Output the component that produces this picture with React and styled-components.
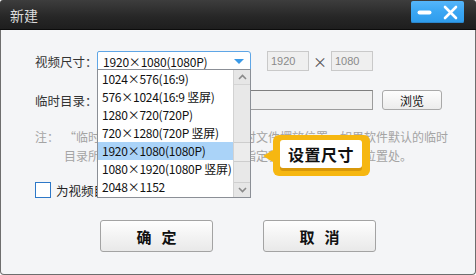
import React from 'react';
import styled, { createGlobalStyle } from 'styled-components';

const GlobalStyle = createGlobalStyle`
  html, body {
    margin: 0;
    padding: 0;
    background: #ffffff;
  }
  body {
    font-family: "Noto Sans CJK SC", "Liberation Sans", sans-serif;
  }
`;

const sizes = [
  '1024×576(16:9)',
  '576×1024(16:9 竖屏)',
  '1280×720(720P)',
  '720×1280(720P 竖屏)',
  '1920×1080(1080P)',
  '1080×1920(1080P 竖屏)',
  '2048×1152',
];

const noteLines = [
  '“临时目录”是视频处理过程中临时文件摆放位置，如果软件默认的临时',
  '目录所在磁盘剩余空间不足，可以指定新的临时目录存放位置处。',
];

const App = () => {
  const selected = '1920×1080(1080P)';

  return (
    <>
      <GlobalStyle />
      <Window>
        <TitleBar>
          <Title>新建</Title>
          <WinButtons>
            <WinButton aria-label="最小化">
              <svg width="15" height="5" viewBox="0 0 15 5">
                <rect x="0.5" y="0.5" width="14" height="4" rx="2" fill="#fff" />
              </svg>
            </WinButton>
            <WinButton aria-label="关闭">
              <svg width="15" height="15" viewBox="0 0 15 15">
                <path d="M2 2 L13 13 M13 2 L2 13" stroke="#fff" strokeWidth="2.6" strokeLinecap="round" />
              </svg>
            </WinButton>
          </WinButtons>
        </TitleBar>

        <Body>
          <Row>
            <Label>视频尺寸：</Label>
            <SelectWrap>
              <Select>
                <span>{selected}</span>
                <Caret />
              </Select>
              <DropList>
                <Options>
                  {sizes.map((s) => (
                    <Option key={s} active={s === selected}>{s}</Option>
                  ))}
                </Options>
                <ScrollBar>
                  <ScrollBtn>
                    <svg width="9" height="6" viewBox="0 0 9 6">
                      <path d="M1 5 L4.5 1.5 L8 5" stroke="#8a8a8a" strokeWidth="1.6" fill="none" />
                    </svg>
                  </ScrollBtn>
                  <Track>
                    <Thumb />
                  </Track>
                  <ScrollBtn>
                    <svg width="9" height="6" viewBox="0 0 9 6">
                      <path d="M1 1 L4.5 4.5 L8 1" stroke="#8a8a8a" strokeWidth="1.6" fill="none" />
                    </svg>
                  </ScrollBtn>
                </ScrollBar>
              </DropList>
            </SelectWrap>
            <DimInput first>1920</DimInput>
            <Times>×</Times>
            <DimInput>1080</DimInput>
          </Row>

          <Row gap={19}>
            <Label>临时目录：</Label>
            <PathInput />
            <SmallButton>浏览</SmallButton>
          </Row>

          <Note>
            <NoteLabel>注：</NoteLabel>
            <NoteText>
              {noteLines.map((line) => (
                <NoteLine key={line}>{line}</NoteLine>
              ))}
            </NoteText>
          </Note>

          <CheckRow>
            <CheckBox />
            <CheckText>为视频目录下创建临时文件夹</CheckText>
          </CheckRow>

          <Actions>
            <BigButton>确定</BigButton>
            <BigButton>取消</BigButton>
          </Actions>

          <Callout>
            <CalloutArrow />
            <CalloutInner>设置尺寸</CalloutInner>
          </Callout>
        </Body>
      </Window>
    </>
  );
};

const Window = styled.div`
  width: 476px;
  height: 275px;
  display: flex;
  flex-direction: column;
  box-sizing: border-box;
`;

const TitleBar = styled.div`
  height: 29px;
  flex-shrink: 0;
  display: flex;
  align-items: flex-start;
  justify-content: space-between;
  background: linear-gradient(#3d3d3d, #262626 60%, #1e1e1e);
  border-bottom: 1px solid #0c0c0c;
  border-radius: 3px 3px 0 0;
  padding: 0 12px 0 10px;
`;

const Title = styled.div`
  color: #dcdcdc;
  font-size: 14px;
  line-height: 30px;
`;

const WinButtons = styled.div`
  margin-top: 1px;
  width: 53px;
  height: 22px;
  display: flex;
  border-radius: 2px;
  background: linear-gradient(#55b6fa, #3aa6f3 50%, #2e9cec);
  box-shadow: inset 0 -1px 0 #2b86cc;
`;

const WinButton = styled.div`
  flex: 1;
  display: flex;
  align-items: center;
  justify-content: center;
`;

const Body = styled.div`
  position: relative;
  flex: 1;
  background: #f4f5f7;
  border: 1px solid #6e6e6e;
  border-top: none;
  border-radius: 0 0 4px 4px;
  padding: 21px 0 0 34px;
  color: #333;
  font-size: 12px;
`;

const Row = styled.div`
  display: flex;
  align-items: center;
  height: 20px;
  margin-top: ${(p) => (p.gap ? `${p.gap}px` : '0')};
`;

const Label = styled.div`
  width: 62px;
  font-size: 12.5px;
  color: #333;
  white-space: nowrap;
`;

const SelectWrap = styled.div`
  position: relative;
  width: 154px;
  height: 20px;
`;

const Select = styled.div`
  box-sizing: border-box;
  height: 20px;
  display: flex;
  align-items: center;
  justify-content: space-between;
  padding: 0 5px 0 5px;
  background: #fff;
  border: 1px solid #5fa6e6;
  border-radius: 2px 3px 0 0;
  color: #111;
  font-size: 12px;
  letter-spacing: -0.2px;
`;

const Caret = styled.div`
  width: 0;
  height: 0;
  border-left: 5px solid transparent;
  border-right: 5px solid transparent;
  border-top: 5px solid #3a9ae8;
  margin-right: 1px;
`;

const DropList = styled.div`
  position: absolute;
  top: 18px;
  left: 0;
  z-index: 2;
  box-sizing: border-box;
  width: 154px;
  height: 129px;
  display: flex;
  background: #fff;
  border: 1px solid #8b8f96;
`;

const Options = styled.div`
  flex: 1;
  min-width: 0;
`;

const Option = styled.div`
  height: 18px;
  line-height: 18px;
  padding-left: 4px;
  white-space: nowrap;
  overflow: hidden;
  color: #111;
  font-size: 12px;
  letter-spacing: -0.25px;
  background: ${(p) => (p.active ? '#aad3f8' : 'transparent')};
`;

const ScrollBar = styled.div`
  width: 16px;
  display: flex;
  flex-direction: column;
  background: #e8e8e8;
  border-left: 1px solid #d2d2d2;
`;

const ScrollBtn = styled.div`
  height: 14px;
  display: flex;
  align-items: center;
  justify-content: center;
  background: #e6e6e6;
  border-bottom: 1px solid #d4d4d4;

  &:last-child {
    border-bottom: none;
    border-top: 1px solid #cfcfcf;
  }
`;

const Track = styled.div`
  flex: 1;
  display: flex;
  flex-direction: column;
  justify-content: flex-end;
  padding-bottom: 20px;
`;

const Thumb = styled.div`
  height: 18px;
  background: #ececec;
  border-top: 1px solid #cdcdcd;
  border-bottom: 1px solid #cdcdcd;
`;

const DimInput = styled.div`
  box-sizing: border-box;
  width: 42px;
  height: 20px;
  margin-left: ${(p) => (p.first ? '16px' : '0')};
  padding-left: 3px;
  display: flex;
  align-items: center;
  background: #efefef;
  border: 1px solid #c9c9c9;
  color: #8a8a8a;
  font-family: "Liberation Sans", Arial, sans-serif;
  font-size: 11px;
`;

const Times = styled.div`
  width: 22px;
  text-align: center;
  color: #555;
  font-size: 14px;
`;

const PathInput = styled.div`
  box-sizing: border-box;
  width: 276px;
  height: 20px;
  background: #f0f0f0;
  border: 1px solid #9c9c9c;
  border-top-color: #7f7f7f;
`;

const SmallButton = styled.div`
  box-sizing: border-box;
  width: 60px;
  height: 20px;
  margin-left: 9px;
  display: flex;
  align-items: center;
  justify-content: center;
  background: linear-gradient(#fdfdfd, #ececec);
  border: 1px solid #a9a9a9;
  border-radius: 3px;
  color: #111;
  font-size: 12px;
`;

const Note = styled.div`
  display: flex;
  margin-top: 17px;
  color: #a4a4a4;
  font-size: 12px;
  line-height: 19px;
`;

const NoteLabel = styled.div`
  width: 29px;
  flex-shrink: 0;
`;

const NoteText = styled.div`
  display: flex;
  flex-direction: column;
`;

const NoteLine = styled.div`
  white-space: nowrap;
`;

const CheckRow = styled.div`
  display: flex;
  align-items: center;
  margin-top: 17px;
  height: 16px;
`;

const CheckBox = styled.div`
  box-sizing: border-box;
  width: 16px;
  height: 16px;
  background: #fff;
  border: 1px solid #2d78c8;
`;

const CheckText = styled.div`
  margin-left: 5px;
  color: #222;
  font-size: 12.5px;
`;

const Actions = styled.div`
  display: flex;
  gap: 50px;
  margin-top: 22px;
  padding-left: 65px;
`;

const BigButton = styled.div`
  box-sizing: border-box;
  width: 113px;
  height: 32px;
  display: flex;
  align-items: center;
  justify-content: center;
  padding-left: 10px;
  background: linear-gradient(#fefefe, #f1f1f1 60%, #e9e9e9);
  border: 1px solid #a3a3a3;
  border-radius: 3px;
  color: #111;
  font-size: 15px;
  font-weight: 700;
  letter-spacing: 10px;
`;

const Callout = styled.div`
  position: absolute;
  left: 272px;
  top: 105px;
  display: flex;
  align-items: center;
  z-index: 3;
`;

const CalloutArrow = styled.div`
  width: 0;
  height: 0;
  border-top: 6px solid transparent;
  border-bottom: 6px solid transparent;
  border-right: 10px solid #f6b711;
  margin-left: -10px;
`;

const CalloutInner = styled.div`
  position: relative;
  z-index: 0;
  box-sizing: border-box;
  width: 97px;
  height: 41px;
  padding: 0 1px 4px 0;
  background: #f6b711;
  border-radius: 6px;
  display: flex;
  align-items: center;
  justify-content: center;
  color: #111;
  font-size: 16px;
  font-weight: 700;
  letter-spacing: 0.5px;

  &::after {
    content: '';
    position: absolute;
    left: 7px;
    right: 8px;
    top: 5px;
    bottom: 8px;
    background: #fff;
    border-radius: 3px;
    box-shadow: 0 3px 0 #d8980a;
    z-index: -1;
  }
`;

export default App;
